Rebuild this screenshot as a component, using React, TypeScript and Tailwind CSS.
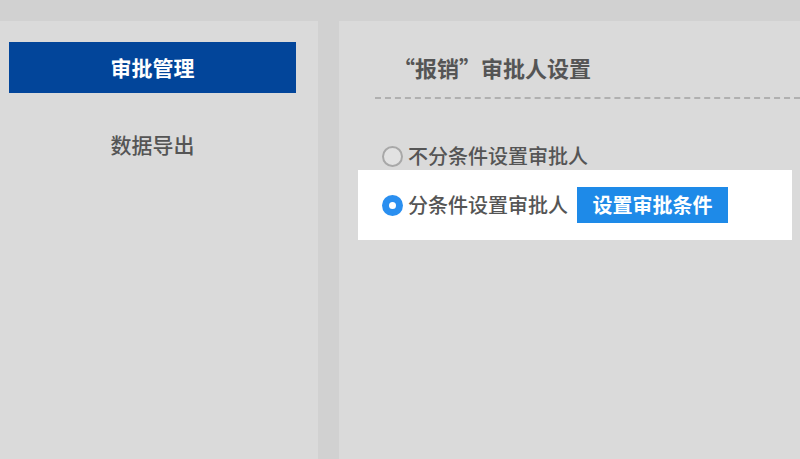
import React from 'react';

function NavItem({ label, active }: { label: string; active?: boolean }) {
  return (
    <div
      className={`h-[51px] flex items-center justify-center text-[21px] ${
        active ? 'bg-[#02459a] text-white font-bold' : 'text-[#555] font-medium'
      }`}
    >
      {label}
    </div>
  );
}

function Radio({ checked }: { checked?: boolean }) {
  return checked ? (
    <span className="w-[21px] h-[21px] rounded-full bg-[#2a8ff0] flex items-center justify-center shrink-0">
      <span className="w-[7px] h-[7px] rounded-full bg-white" />
    </span>
  ) : (
    <span className="w-[21px] h-[21px] rounded-full border-2 border-[#a8a8a8] bg-[#e2e2e2] shrink-0" />
  );
}

export default function App() {
  return (
    <div
      className="w-[800px] h-[459px] bg-[#d1d1d1] pt-[21px] flex overflow-hidden"
      style={{ fontFamily: '"Noto Sans CJK SC", "Noto Sans", sans-serif' }}
    >
      {/* Sidebar */}
      <aside className="w-[318px] bg-[#dadada] pt-[21px] pl-[9px] pr-[22px]">
        <NavItem label="审批管理" active />
        <div className="mt-[26px]">
          <NavItem label="数据导出" />
        </div>
      </aside>

      {/* Main */}
      <main className="flex-1 ml-[21px] bg-[#dadada] pl-[19px] pr-[8px]">
        <div className="pl-[17px]">
          <h1 className="h-[76px] pt-[31px] pl-[18px] text-[22px] font-bold text-[#555] leading-[30px]">
            “报销”审批人设置
          </h1>
          <div className="border-t-2 border-dashed border-[#b0b0b0] mr-[-8px]" />
        </div>

        <div className="mt-[44px] pl-[24px] h-[26px] flex items-center gap-[5px] text-[20px] font-medium text-[#555]">
          <Radio />
          <span>不分条件设置审批人</span>
        </div>

        <div className="mt-[1px] bg-white h-[70px] pl-[24px] flex items-center text-[20px] font-medium text-[#555]">
          <Radio checked />
          <span className="ml-[5px]">分条件设置审批人</span>
          <button className="ml-[9px] h-[36px] w-[151px] bg-[#1e8ae8] text-white font-bold text-[20px] flex items-center justify-center">
            设置审批条件
          </button>
        </div>
      </main>
    </div>
  );
}
